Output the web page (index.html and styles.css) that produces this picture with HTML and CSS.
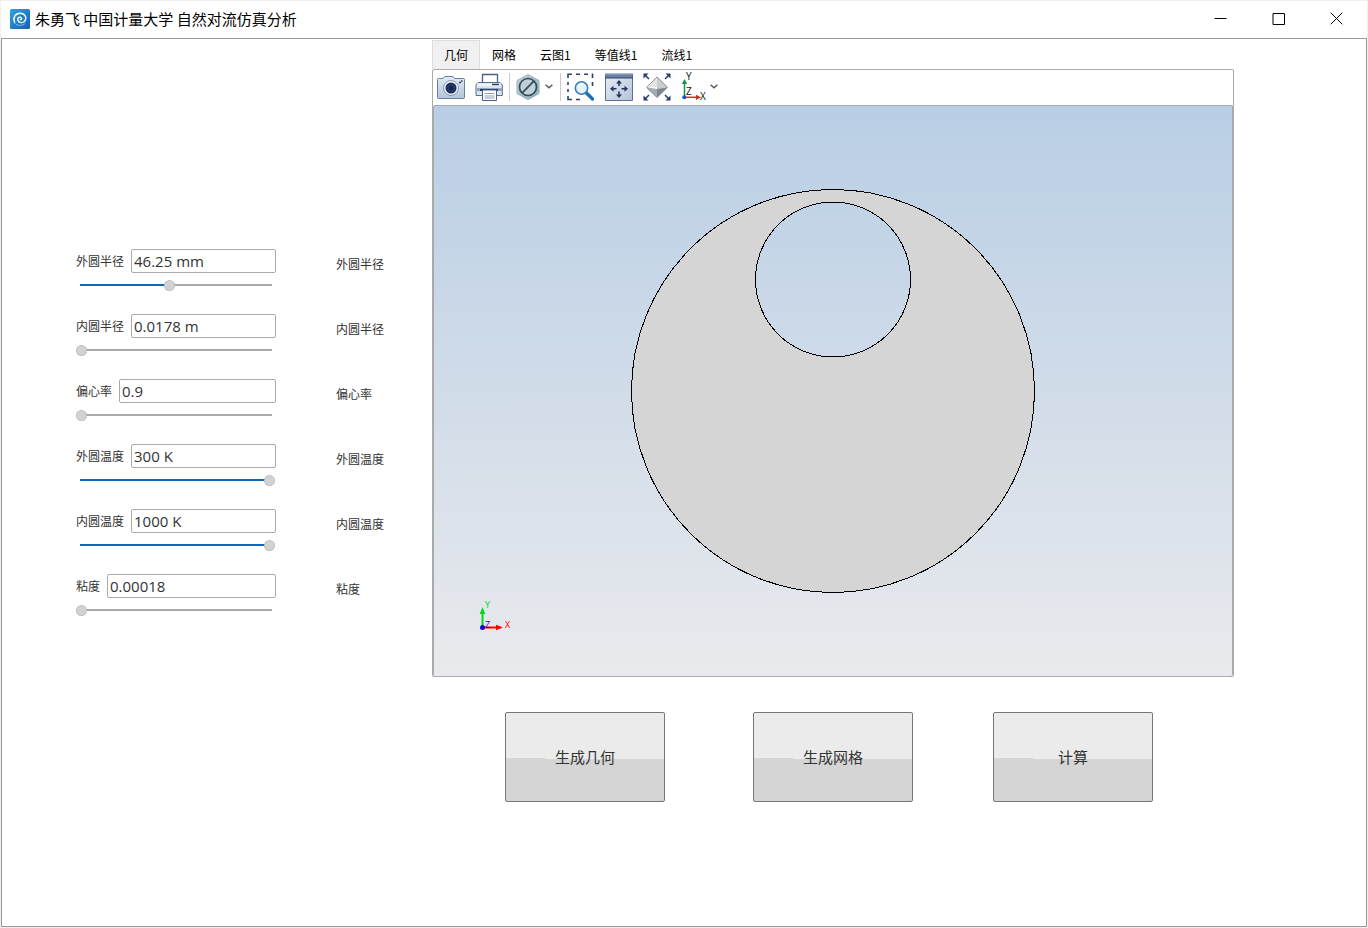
FILE: index.html
```html
<!DOCTYPE html>
<html lang="zh-CN">
<head>
<meta charset="utf-8">
<title>朱勇飞 中国计量大学 自然对流仿真分析</title>
<link rel="stylesheet" href="styles.css">
</head>
<body>
<div class="window">
  <header class="titlebar">
    <svg class="app-icon" viewBox="0 0 20 20" aria-hidden="true">
      <defs><linearGradient id="app" x1="0" y1="0" x2="1" y2="1"><stop offset="0" stop-color="#2ea3e0"/><stop offset="1" stop-color="#1560b0"/></linearGradient></defs>
      <rect width="20" height="20" rx="1.5" fill="url(#app)"/>
      <path d="M4.600 13.400C2.600 9 5.200 4.200 10.200 4.200C14 4.200 16.200 7 15.700 9.900C15.200 12.700 12.700 14.200 10.200 13.400C7.900 12.700 7.300 10.500 8.200 9.100C9.100 7.900 11.200 8.100 11.600 9.400C11.800 10.300 11.100 10.900 10.400 10.700" fill="none" stroke="#fff" stroke-width="1.400" stroke-linecap="round"/>
      <path d="M5 14.200C7 17 12.500 17.400 15.500 14" fill="none" stroke="#7fbbe6" stroke-width="1"/>
    </svg>
    <h1 class="title">朱勇飞 中国计量大学 自然对流仿真分析</h1>
    <div class="controls">
      <button class="control" type="button" aria-label="最小化"><svg viewBox="0 0 13 13"><path d="M0.500 6.500H12.500" /></svg></button>
      <button class="control" type="button" aria-label="最大化"><svg viewBox="0 0 13 13"><path d="M1 1.500H12.500V12.500H1Z" /></svg></button>
      <button class="control" type="button" aria-label="关闭"><svg viewBox="0 0 13 13"><path d="M0.700 0.700L12.300 12.300M12.300 0.700L0.700 12.300" /></svg></button>
    </div>
  </header>

  <main class="client">
    <form class="params">
      <div class="param">
        <div class="field"><label for="p1">外圆半径</label><input class="value" id="p1" type="text" value="46.25 mm"></div>
        <span class="note">外圆半径</span>
        <input class="slider" type="range" aria-label="外圆半径" value="47" style="--fill:47%">
      </div>
      <div class="param">
        <div class="field"><label for="p2">内圆半径</label><input class="value" id="p2" type="text" value="0.0178 m"></div>
        <span class="note">内圆半径</span>
        <input class="slider" type="range" aria-label="内圆半径" value="0" style="--fill:0%">
      </div>
      <div class="param">
        <div class="field"><label for="p3">偏心率</label><input class="value" id="p3" type="text" value="0.9"></div>
        <span class="note">偏心率</span>
        <input class="slider" type="range" aria-label="偏心率" value="0" style="--fill:0%">
      </div>
      <div class="param">
        <div class="field"><label for="p4">外圆温度</label><input class="value" id="p4" type="text" value="300 K"></div>
        <span class="note">外圆温度</span>
        <input class="slider" type="range" aria-label="外圆温度" value="100" style="--fill:96%">
      </div>
      <div class="param">
        <div class="field"><label for="p5">内圆温度</label><input class="value" id="p5" type="text" value="1000 K"></div>
        <span class="note">内圆温度</span>
        <input class="slider" type="range" aria-label="内圆温度" value="100" style="--fill:96%">
      </div>
      <div class="param">
        <div class="field"><label for="p6">粘度</label><input class="value" id="p6" type="text" value="0.00018"></div>
        <span class="note">粘度</span>
        <input class="slider" type="range" aria-label="粘度" value="0" style="--fill:0%">
      </div>
    </form>

    <section class="workspace">
      <div class="tabs" role="tablist">
        <button class="tab active" type="button" role="tab" aria-selected="true">几何</button>
        <button class="tab" type="button" role="tab">网格</button>
        <button class="tab" type="button" role="tab">云图1</button>
        <button class="tab" type="button" role="tab">等值线1</button>
        <button class="tab" type="button" role="tab">流线1</button>
      </div>

      <div class="viewer">
        <div class="toolbar">
          <button class="tool" type="button" aria-label="截图">
            <svg viewBox="0 0 28 28">
              <defs><linearGradient id="cam" x1="0" y1="0" x2="0" y2="1"><stop offset="0" stop-color="#e2eaf4"/><stop offset="1" stop-color="#b5c4d8"/></linearGradient></defs>
              <path d="M1.500 5.500H6L7.500 3.500H16L17.500 5.500H26.500Q27.500 5.500 27.500 6.500V24.500Q27.500 25.500 26.500 25.500H1.500Q.5 25.500 .5 24.500V6.500Q.5 5.500 1.500 5.500Z" fill="url(#cam)" stroke="#6780a6"/>
              <circle cx="14" cy="15" r="7.500" fill="#e8eef6" stroke="#7489ab" stroke-width=".8"/>
              <circle cx="14" cy="15" r="5.500" fill="#1d2f5c"/>
              <circle cx="14" cy="15" r="3" fill="#15244b" stroke="#34507f" stroke-width=".7"/>
              <path d="M22 9.500h2M24 8h1.500" stroke="#253c6b" stroke-width="1.300"/>
            </svg>
          </button>
          <button class="tool" type="button" aria-label="打印">
            <svg viewBox="0 0 28 28">
              <path d="M7.500 10V1.500H22.500V10" fill="#fff" stroke="#4a5e86" stroke-width="1.300"/>
              <path d="M3 9.500H25L27.300 12V22.500H1V12Z" fill="#dce4ee" stroke="#5a6f95"/>
              <path d="M2 10.500H26V13H2Z" fill="#f1f5fa"/>
              <path d="M17 11.500H24" stroke="#223864" stroke-width="1.400"/>
              <path d="M1.500 15H27V18H1.500Z" fill="#93a6c3"/>
              <path d="M5 17H23" stroke="#233863" stroke-width="2"/>
              <path d="M7.500 17H21.500V27.500H7.500Z" fill="#fff" stroke="#4a5e86"/>
              <path d="M9.500 20.500H19.500M9.500 23H19.500M9.500 25H19.500" stroke="#8c9db8"/>
            </svg>
          </button>
          <span class="separator"></span>
          <button class="tool menu" type="button" aria-label="剪裁">
            <svg viewBox="0 0 28 28">
              <defs><linearGradient id="hex" x1="0" y1="0" x2="1" y2="1"><stop offset="0" stop-color="#c8dbe2"/><stop offset="1" stop-color="#85a7b5"/></linearGradient></defs>
              <path d="M14 1.500L25 7.500V20.500L14 26.700L3 20.500V7.500Z" fill="url(#hex)" stroke="#9bb2bf"/>
              <path d="M14 1.500V6M14 23V26.500M3 7.500L7 10M25 7.500L21 10M3 20.500L7 18M25 20.500L21 18" stroke="#a9c4ce"/>
              <circle cx="14" cy="14" r="8.500" fill="#bfd0d8" stroke="#354953" stroke-width="1.700"/>
              <path d="M8.200 19.800L19.800 8.200" stroke="#354953" stroke-width="1.700"/>
            </svg>
            <svg class="chevron" viewBox="0 0 8 5"><path d="M.6 .8L4 3.800L7.400 .8"/></svg>
          </button>
          <span class="separator"></span>
          <button class="tool" type="button" aria-label="框选缩放">
            <svg viewBox="0 0 28 28">
              <path d="M1 5V1.300H5M9 1.300H13M17 1.300H21M25.500 .5V5M25.500 9V13M1 9V12M1 16V19M1 23V26.500H5M9 26.500H13" fill="none" stroke="#2b4270" stroke-width="1.600"/>
              <path d="M19.500 20L25.500 26" stroke="#226cb0" stroke-width="3.300" stroke-linecap="round"/>
              <circle cx="14.500" cy="15" r="6.200" fill="#e3f2fb" stroke="#3b7fb7" stroke-width="1.600"/>
              <path d="M10.500 14Q12 10.500 16 11" stroke="#fff" stroke-width="1.500" fill="none"/>
            </svg>
          </button>
          <button class="tool" type="button" aria-label="缩放到窗口大小">
            <svg viewBox="0 0 28 28">
              <defs><linearGradient id="fit" x1="0" y1="0" x2="1" y2="1"><stop offset="0" stop-color="#e7edf5"/><stop offset="1" stop-color="#b6c4d7"/></linearGradient></defs>
              <path d="M.5 1H27.500V27.500H.5Z" fill="url(#fit)" stroke="#5c7093"/>
              <path d="M1 1.500H27V5H1Z" fill="#6a80a5"/><path d="M0 5H28" stroke="#2d4370"/>
              <path d="M14 7L17 10.500H14.800V13H13.200V10.500H11ZM14 25L17 21.500H14.800V18.500H13.200V21.500H11ZM5 15.700L8.500 12.700V14.900H11.500V16.500H8.500V18.700ZM23 15.700L19.500 12.700V14.900H16.500V16.500H19.500V18.700Z" fill="#20365f"/>
            </svg>
          </button>
          <button class="tool" type="button" aria-label="缩放到选择范围">
            <svg viewBox="0 0 28 28">
              <path d="M14 4L24.500 14.300H3.500Z" fill="#e2e4e6"/><path d="M14 4L24.500 14.300L14 16Z" fill="#c9cdd0"/>
              <path d="M3.500 14.300L14 16V24.500Z" fill="#a6acb1"/><path d="M24.500 14.300L14 16V24.500Z" fill="#7f878e"/>
              <path d="M14 4L24.500 14.300L14 24.500L3.500 14.300Z" fill="none" stroke="#727b84" stroke-width=".8"/>
              <path d="M1.500 1.500L6 6M26.500 1.500L22 6M1.500 26.500L6 22M26.500 26.500L22 22" stroke="#263c69" stroke-width="1.500"/>
              <path d="M.5 .5H5.500L.5 5.500ZM27.500 .5H22.500L27.500 5.500ZM.5 27.500H5.500L.5 22.500ZM27.500 27.500H22.500L27.500 22.500Z" fill="#263c69"/>
            </svg>
          </button>
          <button class="tool menu" type="button" aria-label="视图方向">
            <svg viewBox="0 0 28 28">
              <path d="M3.500 24V9" stroke="#159447" stroke-width="1.500"/><path d="M.8 11L3.500 6L6.200 11Z" fill="#159447"/>
              <path d="M4 24.300H16" stroke="#e32322" stroke-width="1.500"/><path d="M15 21.700L20 24.300L15 27Z" fill="#e32322"/>
              <circle cx="3.300" cy="24.300" r="2" fill="#1d56b5"/>
              <g class="axis-text"><text x="5" y="7">Y</text><text x="5" y="22">Z</text><text x="19" y="27">X</text></g>
            </svg>
            <svg class="chevron" viewBox="0 0 8 5"><path d="M.6 .8L4 3.800L7.400 .8"/></svg>
          </button>
        </div>

        <div class="canvas">
          <svg class="geometry" viewBox="0 0 798 570" role="img" aria-label="偏心圆环">
            <path d="M197.500 285a201.500 201.500 0 1 0 403 0a201.500 201.500 0 1 0 -403 0ZM321.500 173.500a77.500 77.500 0 1 0 155 0a77.500 77.500 0 1 0 -155 0Z" fill="#d5d5d5" fill-rule="evenodd" stroke="#000" shape-rendering="crispEdges"/>
          </svg>
          <svg class="triad" viewBox="0 0 36 32" aria-hidden="true">
            <path d="M4.500 28V12" stroke="#00d91c" stroke-width="2"/><path d="M1.700 14L4.500 7L7.300 14Z" fill="#00d91c"/>
            <path d="M5 27.500H19" stroke="#f00" stroke-width="2"/><path d="M18 24.700L25 27.500L18 30.300Z" fill="#f00"/>
            <circle cx="4.500" cy="27.500" r="2.500" fill="#0a0ae0"/>
            <text x="7" y="8" fill="#00d91c">Y</text><text x="7" y="28" fill="#0a0ae0">Z</text><text x="27" y="28" fill="#f00">X</text>
          </svg>
        </div>
      </div>

      <div class="actions">
        <button class="action" type="button">生成几何</button>
        <button class="action" type="button">生成网格</button>
        <button class="action" type="button">计算</button>
      </div>
    </section>
  </main>
</div>
</body>
</html>
```

FILE: styles.css
```css
* { box-sizing: border-box; }

body {
  margin: 0;
  background: #f0f0f0;
  color: #333;
  font-family: "Open Sans", "Noto Sans CJK SC", sans-serif;
  font-size: 12px;
}

button, input { font: inherit; color: inherit; margin: 0; }
button { padding: 0; border: 0; background: none; }

.window {
  display: flex;
  flex-direction: column;
  min-height: 100vh;
  padding: 1px;
}

.titlebar {
  display: flex;
  align-items: center;
  height: 37px;
  padding: 0 2px 2px 9px;
  background: #fff;
  color: #000;
}

.app-icon { width: 20px; height: 20px; }

.title {
  flex: 1;
  margin: 0 0 0 5px;
  font-family: "Noto Sans CJK SC", sans-serif;
  font-size: 15px;
  font-weight: 400;
  line-height: 20px;
}

.controls { display: flex; height: 100%; }

.control {
  display: flex;
  align-items: center;
  justify-content: center;
  width: 58px;
}

.control svg {
  width: 13px;
  height: 13px;
  fill: none;
  stroke: #000;
  stroke-width: 1;
}

.client {
  display: flex;
  flex: 1;
  border: 1px solid #999;
  background: #fff;
}

.params {
  display: flex;
  flex: none;
  flex-direction: column;
  gap: 23px;
  width: 430px;
  padding: 210px 0 24px 74px;
}

.param {
  display: grid;
  grid-template-columns: 200px 1fr;
  grid-template-rows: 24px 12px;
  gap: 6px 60px;
}

.field {
  display: flex;
  align-items: center;
  gap: 7px;
}

.field label { flex: none; }

.value {
  flex: 1;
  min-width: 0;
  height: 24px;
  padding: 0 2px;
  border: 1px solid #aaa;
  border-radius: 2px;
  background: #fff;
  font-size: 15px;
}

.note { line-height: 32px; }

.slider {
  appearance: none;
  width: 199px;
  height: 12px;
  background:
    linear-gradient(#0a69be, #0a69be) 4px 5px / var(--fill) 2px no-repeat,
    linear-gradient(#aaa, #aaa) 4px 5px / 192px 2px no-repeat;
}

.slider::-webkit-slider-thumb {
  appearance: none;
  width: 11px;
  height: 11px;
  border: 1px dotted #aaa;
  border-radius: 50%;
  background: #d2d2d2;
}

.workspace {
  flex: 1;
  min-width: 0;
  margin-right: 132px;
}

.tabs { display: flex; padding-top: 1px; }

.tab {
  height: 29px;
  padding: 0 12px;
  color: #000;
  font-family: "Noto Sans CJK SC", sans-serif;
}

.tab.active {
  padding: 0 11px;
  border: solid #ddd;
  border-width: 0 1px;
  background: #f0f0f0;
  box-shadow: inset 0 1px #ddd;
}

.viewer {
  border: 1px solid #aaa;
  border-radius: 2px;
}

.toolbar {
  display: flex;
  align-items: center;
  gap: 10px;
  height: 35px;
  padding: 0 4px 2px;
}

.tool { display: flex; align-items: center; }
.tool svg { width: 28px; height: 28px; overflow: visible; }
.menu { gap: 3px; margin-left: -6px; }
.menu:last-child { margin-left: 0; gap: 1px; }

.tool .chevron {
  width: 8px;
  height: 5px;
  fill: none;
  stroke: #4c5965;
  stroke-width: 1.4;
}

.separator {
  width: 1px;
  height: 28px;
  margin: 0 0 0 -4px;
  background: #ccc;
}

.menu + .separator { margin: 0 -4px 0 -3px; }

.axis-text { fill: #111; font-size: 10px; }

.canvas {
  position: relative;
  border: solid #aaa;
  border-width: 1px 1px 0;
  border-radius: 2px;
  background: linear-gradient(#b9cee5, #e9eaed);
}

.geometry { display: block; width: 100%; height: auto; }

.triad {
  position: absolute;
  bottom: 44px;
  left: 44px;
  width: 36px;
  height: 32px;
  overflow: visible;
  font-size: 9px;
}

.actions {
  display: grid;
  grid-template-columns: 168px 160px 160px;
  gap: 80px;
  padding: 35px 0 35px 73px;
}

.action {
  width: 160px;
  height: 90px;
  padding-bottom: 2px;
  border: 1px solid #777;
  border-radius: 2px;
  background: linear-gradient(180.4deg, #ebebeb 52%, #d5d5d5 52%);
  font-size: 15px;
}
```
